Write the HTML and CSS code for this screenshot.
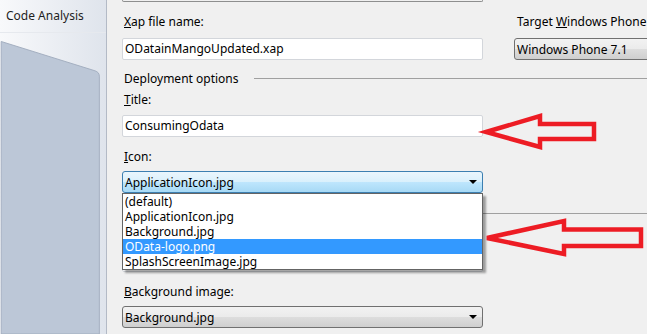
FILE: index.html
```html
<!DOCTYPE html>
<html lang="en">
<head>
    <meta charset="UTF-8">
    <title>Project Properties - Application</title>
    <link rel="stylesheet" href="styles.css">
</head>
<body>
    <div class="page">
        <!-- Coluna lateral com as abas -->
        <aside class="sidebar">
            <div class="tab">Code Analysis</div>
            <svg class="panel" width="101" height="300" viewBox="0 0 101 300">
                <path d="M0,0.5 L96,30.5 Q100.5,32 100.5,36 L100.5,300 L0,300 Z" fill="#bcc7d7" stroke="#a3aebf" stroke-width="1"/>
            </svg>
        </aside>

        <main class="props">
            <div class="stub"></div>

            <div class="row">
                <div class="col">
                    <div class="label"><u>X</u>ap file name:</div>
                    <div class="textbox">ODatainMangoUpdated.xap</div>
                </div>
                <div class="col col-right">
                    <div class="label label-right">Target <u>W</u>indows Phone Version:</div>
                    <div class="combo combo-wide"><span>Windows Phone 7.1</span></div>
                </div>
            </div>

            <div class="section"><span>Deployment options</span><i class="rule"></i></div>

            <div class="label label-gap"><u>T</u>itle:</div>
            <div class="textbox">ConsumingOdata</div>

            <div class="label label-gap2"><u>I</u>con:</div>
            <div class="dropdown">
                <div class="combo combo-open">
                    <span>ApplicationIcon.jpg</span>
                    <b class="caret"></b>
                </div>
                <ul class="list">
                    <li>(default)</li>
                    <li>ApplicationIcon.jpg</li>
                    <li>Background.jpg</li>
                    <li class="selected">OData-logo.png</li>
                    <li>SplashScreenImage.jpg</li>
                </ul>
            </div>

            <!-- Grupo seguinte, escondido atrás da lista aberta -->
            <div class="section section-gap section-hidden"><i class="rule"></i></div>
            <div class="label label-gap"></div>
            <div class="textbox"></div>

            <div class="label label-gap2"><u>B</u>ackground image:</div>
            <div class="combo">
                <span>Background.jpg</span>
                <b class="caret"></b>
            </div>
        </main>

        <!-- Setas vermelhas de anotação por cima da tela -->
        <svg class="arrows" width="647" height="334" viewBox="0 0 647 334">
            <path d="M486,132 L540,116 L540,124 L594,124 L594,139 L540,139 L540,147 Z"/>
            <path d="M487,238 L564,221 L564,229.5 L641,229.5 L641,246 L564,246 L564,254 Z"/>
        </svg>
    </div>
</body>
</html>
```

FILE: styles.css
```css
body {
    margin: 0;
    font-family: "Noto Sans", "Open Sans", sans-serif;
    font-size: 12px;
    color: #000;
    background: #f0f0f0;
}
.page {
    position: relative;
    width: 647px;
    height: 334px;
    overflow: hidden;
    display: flex;
    background: #f0f0f0;
}
.sidebar {
    width: 106px;
    flex-shrink: 0;
    border-right: 1px solid #b3bac6;
    background: linear-gradient(to right, #f8f9fb, #dfe4ec);
    display: flex;
    flex-direction: column;
}
.tab {
    height: 32px;
    line-height: 32px;
    padding-left: 6px;
    border-bottom: 1px solid #e6e9ee;
    color: #1e1e1e;
    white-space: nowrap;
}
.panel {
    display: block;
    margin-top: 8px;
}
.props {
    flex: 1;
    padding-left: 15px;
    min-width: 0;
}
.stub {
    width: 359px;
    height: 1px;
    border: 1px solid #8e8f8f;
    border-top: none;
    border-radius: 0 0 2px 2px;
}
.row {
    display: flex;
    gap: 31px;
    margin-top: 12px;
}
.col {
    width: 361px;
    flex-shrink: 0;
}
.col-right {
    width: 200px;
}
.label {
    line-height: 16px;
    height: 16px;
    padding-left: 2px;
    margin-bottom: 8px;
    white-space: nowrap;
}
.label-right {
    padding-left: 3px;
}
.label-gap {
    margin-top: 6px;
    margin-bottom: 7px;
}
.label-gap2 {
    margin-top: 12px;
    margin-bottom: 6px;
}
.textbox {
    box-sizing: border-box;
    width: 361px;
    height: 22px;
    line-height: 20px;
    padding-left: 2px;
    background: #fff;
    border: 1px solid #d3d6db;
    border-radius: 2px;
    white-space: nowrap;
}
.section {
    display: flex;
    align-items: center;
    height: 16px;
    margin-top: 10px;
    padding-left: 2px;
}
.section-gap {
    margin-top: 12px;
}
.section-hidden {
    padding-left: 100px;
}
.rule {
    flex: 1;
    height: 1px;
    margin-left: 15px;
    background: #a0a0a0;
}
.combo {
    box-sizing: border-box;
    width: 361px;
    height: 22px;
    display: flex;
    align-items: center;
    justify-content: space-between;
    padding: 0 5px 0 2px;
    border: 1px solid #707070;
    border-radius: 3px;
    background: linear-gradient(#f2f2f2 0%, #ebebeb 50%, #dddddd 51%, #cfcfcf 100%);
    white-space: nowrap;
}
.combo-wide {
    width: 200px;
}
.combo-open {
    border-color: #3c7fb1;
    background: linear-gradient(#eaf6fd 0%, #d9f0fc 50%, #bee6fd 51%, #a7d9f5 100%);
}
.caret {
    width: 0;
    height: 0;
    border-left: 4px solid transparent;
    border-right: 4px solid transparent;
    border-top: 4px solid #000;
}
.dropdown {
    position: relative;
    width: 361px;
}
.list {
    position: absolute;
    top: 22px;
    left: 0;
    z-index: 2;
    box-sizing: border-box;
    width: 361px;
    margin: 0;
    padding: 0;
    list-style: none;
    background: #fff;
    border: 1px solid #646464;
    box-shadow: 3px 3px 2px rgba(0, 0, 0, 0.35);
}
.list li {
    height: 15px;
    line-height: 15px;
    padding-left: 2px;
}
.list .selected {
    background: #3399ff;
    color: #fff;
}
.arrows {
    position: absolute;
    top: 0;
    left: 0;
    z-index: 3;
    pointer-events: none;
}
.arrows path {
    fill: none;
    stroke: #ed1c24;
    stroke-width: 4.5;
    stroke-linejoin: miter;
}
```
